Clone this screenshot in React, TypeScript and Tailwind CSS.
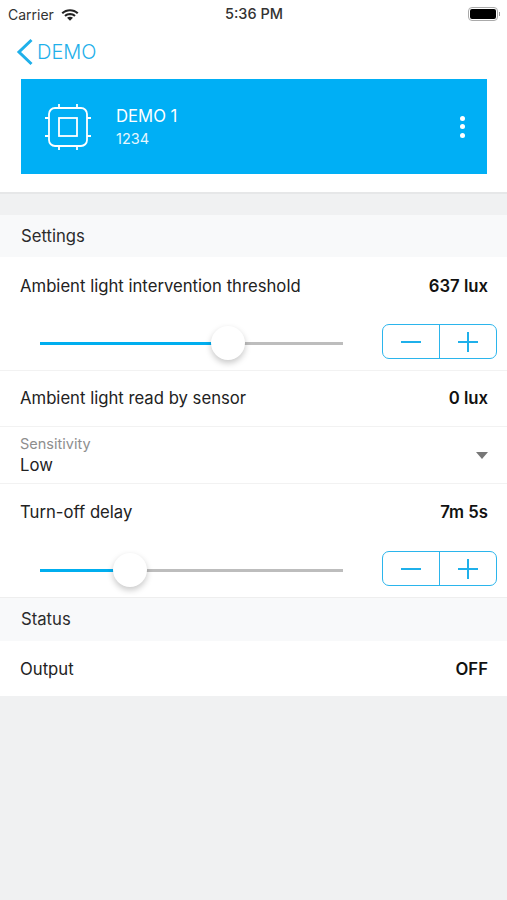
function SectionHeader({ title, className }: { title: string; className: string }) {
  return (
    <div className={`flex items-center bg-[#f8f9fa] pl-[21px] text-[16.7px] text-[#2b2b2b] ${className}`}>
      {title}
    </div>
  )
}

function ValueRow({ label, value, className }: { label: string; value: string; className: string }) {
  return (
    <div className={`flex items-center justify-between pl-[20px] pr-[19px] text-[16.7px] text-[#222] ${className}`}>
      <span>{label}</span>
      <span className="font-semibold text-[#111]">{value}</span>
    </div>
  )
}

function SliderRow({ percent }: { percent: number }) {
  return (
    <div className="flex h-[56px] items-start pl-[40px] pr-[10px] pt-[10px]">
      <div className="relative mt-[18px] h-[2.5px] w-[303px] bg-[#bdbdbd]">
        <div className="h-full bg-[#00aeef]" style={{ width: `${percent}%` }} />
        <div
          className="absolute top-[-16px] ml-[-17px] h-[34px] w-[34px] rounded-full bg-white shadow-[0_3px_6px_rgba(0,0,0,0.22)]"
          style={{ left: `${percent}%` }}
        />
      </div>
      <div className="ml-auto flex h-[35px] w-[115px] rounded-[7px] border-[1.5px] border-[#2bb5ec] text-[#1fb0ea]">
        <div className="flex flex-1 items-center justify-center border-r-[1.5px] border-[#2bb5ec]">
          <svg width="20" height="20" viewBox="0 0 20 20" fill="none" stroke="currentColor" strokeWidth="2">
            <path d="M0 10 H20" />
          </svg>
        </div>
        <div className="flex w-[56px] items-center justify-center">
          <svg width="20" height="20" viewBox="0 0 20 20" fill="none" stroke="currentColor" strokeWidth="2">
            <path d="M0 10 H20 M10 0 V20" />
          </svg>
        </div>
      </div>
    </div>
  )
}

export default function App() {
  return (
    <div
      className="flex h-[900px] w-[507px] flex-col overflow-hidden bg-[#f0f1f2]"
      style={{ fontFamily: "Inter, 'Liberation Sans', sans-serif" }}
    >
      <div className="h-[194px] border-b-2 border-[#e6e7e8] bg-white">
        {/* status bar */}
        <div className="flex h-[28px] items-center justify-between pl-[8px] pr-[7px] text-[14px] text-[#333]">
          <div className="flex w-[100px] items-center gap-[7px]">
            <span>Carrier</span>
            <svg width="18" height="13" viewBox="0 0 18 13" fill="#222">
              <path d="M0.5 4.5 C5 0 13 0 17.5 4.5 L16 6 C12 2.3 6 2.3 2 6 Z" />
              <path d="M3.3 7.2 C6.5 4.3 11.5 4.3 14.7 7.2 L13.2 8.7 C11 6.8 7 6.8 4.8 8.7 Z" />
              <path d="M6 9.8 C7.7 8.5 10.3 8.5 12 9.8 L9 12.8 Z" />
            </svg>
          </div>
          <span className="text-[14.5px] font-medium">5:36 PM</span>
          <div className="flex w-[100px] items-center justify-end">
            <div className="h-[14px] w-[30px] rounded-[4px] border-[1.5px] border-[#aaa] p-[1px]">
              <div className="h-full w-full rounded-[2px] bg-black" />
            </div>
            <div className="ml-[1px] h-[4px] w-[1px] bg-[#999]" />
          </div>
        </div>

        {/* nav */}
        <div className="flex h-[51px] items-center pb-[4px] pl-[16px] text-[#1fb0ea]">
          <svg width="18" height="28" viewBox="0 0 18 28" fill="none" stroke="currentColor" strokeWidth="3">
            <path d="M15.5 2 L3 14 L15.5 26" />
          </svg>
          <span className="ml-[3px] text-[20px] font-light">DEMO</span>
        </div>

        {/* device card */}
        <div className="mx-[21px] flex h-[95px] w-[466px] items-center bg-[#00aff5] text-white">
          <svg className="ml-[24px]" width="46" height="46" viewBox="0 0 46 46" fill="none" stroke="white" strokeWidth="1.8">
            <rect x="4" y="4" width="38" height="38" rx="6" />
            <rect x="14" y="14" width="18" height="18" />
            <path d="M14 0 V4 M32 0 V4 M14 42 V46 M32 42 V46 M0 14 H4 M0 32 H4 M42 14 H46 M42 32 H46" />
          </svg>
          <div className="ml-[25px] mt-[2px]">
            <div className="text-[16.7px] leading-[22px]">DEMO 1</div>
            <div className="mt-px text-[14.5px] leading-[22px] opacity-90">1234</div>
          </div>
          <div className="ml-auto mr-[22px] flex flex-col gap-[3.5px]">
            <div className="h-[5px] w-[5px] rounded-full bg-white" />
            <div className="h-[5px] w-[5px] rounded-full bg-white" />
            <div className="h-[5px] w-[5px] rounded-full bg-white" />
          </div>
        </div>
      </div>

      <div className="h-[21px]" />

      <SectionHeader title="Settings" className="h-[42px] pt-[2px]" />
      <div className="bg-white">
        <ValueRow label="Ambient light intervention threshold" value="637 lux" className="h-[57px] pt-[2px]" />
        <SliderRow percent={62} />
        <ValueRow label="Ambient light read by sensor" value="0 lux" className="h-[57px] border-y border-[#f2f2f2]" />

        <div className="flex h-[57px] items-center justify-between border-b border-[#f2f2f2] pl-[20px] pr-[19px]">
          <div>
            <div className="text-[14.5px] leading-[20px] text-[#8e8e8e]">Sensitivity</div>
            <div className="text-[16.7px] leading-[22px] text-[#222]">Low</div>
          </div>
          <div className="h-0 w-0 border-x-[6px] border-t-[7px] border-x-transparent border-t-[#777]" />
        </div>

        <ValueRow label="Turn-off delay" value="7m 5s" className="h-[57px]" />
        <SliderRow percent={29.7} />
        <div className="h-px bg-[#eeeeee]" />
      </div>

      <SectionHeader title="Status" className="h-[43px]" />
      <ValueRow label="Output" value="OFF" className="h-[55px] bg-white pt-[2px]" />
    </div>
  )
}
